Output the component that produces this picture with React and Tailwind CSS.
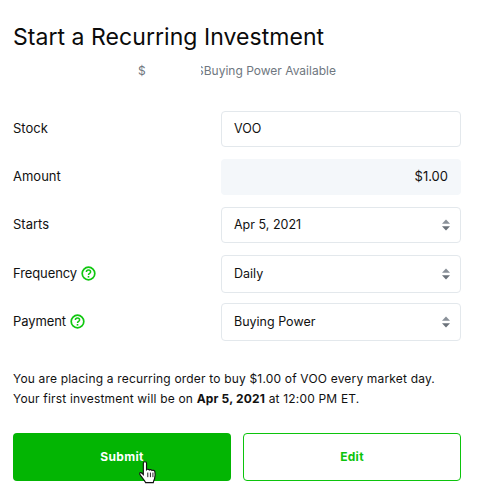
const font = { fontFamily: "Inter, 'Liberation Sans', sans-serif" };

function Help() {
  return (
    <svg width="15" height="15" viewBox="0 0 15 15" className="shrink-0" fill="none">
      <circle cx="7.5" cy="7.500" r="6.300" stroke="#0fc70f" strokeWidth="1.700" />
      <path d="M5.400 6c0-1.300 1-2 2.100-2s2.100.7 2.100 1.900c0 1.500-2.100 1.500-2.100 3" stroke="#0fc70f" strokeWidth="1.500" />
      <rect x="6.700" y="10" width="1.600" height="1.600" fill="#0fc70f" />
    </svg>
  );
}

function Arrows() {
  return (
    <svg width="8" height="12" viewBox="0 0 8 12" className="shrink-0">
      <path d="M4 0.500 8 4.800H0Z" fill="#8a9199" />
      <path d="M4 11.500 0 7.200H8Z" fill="#6b727a" />
    </svg>
  );
}

function Row({ label, help, children }) {
  return (
    <div className="flex items-center justify-between">
      <div className="mb-[2px] flex items-center gap-[4px] text-[13px] leading-5 text-[#111]">
        <span className={help ? "tracking-[-0.1px]" : ""}>{label}</span>
        {help && <Help />}
      </div>
      {children}
    </div>
  );
}

function Select({ value, h = "h-[36px]" }) {
  return (
    <div className={`flex w-[240px] items-center justify-between rounded border border-[#e3e8ec] bg-white pl-[12px] pr-[10px] text-[12.500px] text-[#111] ${h}`}>
      <span>{value}</span>
      <Arrows />
    </div>
  );
}

export default function App() {
  return (
    <div style={font} className="h-[499px] w-[488px] overflow-hidden bg-white px-[13px] pt-[21px]">
      <h1 className="text-[23px] font-normal leading-[32px] tracking-[0.05px] text-[#0b0b0b]">Start a Recurring Investment</h1>
      <div className="mt-[8px] flex h-[20px] items-center pl-[125px] text-[12px] text-[#6f7780]">
        <span>$</span>
        <span className="w-[55px]" />
        <span className="flex w-[3px] justify-end overflow-hidden">
          <span className="shrink-0">$</span>
        </span>
        <span>Buying Power Available</span>
      </div>

      <div className="mt-[30px] flex w-[448px] flex-col gap-[12px]">
        <Row label="Stock">
          <div className="flex h-[36px] w-[240px] items-center rounded border border-[#e3e8ec] bg-white pl-[12px] text-[12.500px] text-[#111]">VOO</div>
        </Row>
        <Row label="Amount">
          <div className="flex h-[36px] w-[240px] items-center justify-end rounded bg-[#f4f7fa] pr-[13px] text-[13px] text-[#111]">$1.00</div>
        </Row>
        <Row label="Starts">
          <Select value="Apr 5, 2021" />
        </Row>
        <div className="flex flex-col gap-[10px]">
          <Row label="Frequency" help>
            <Select value="Daily" h="h-[38px]" />
          </Row>
          <Row label="Payment" help>
            <Select value="Buying Power" h="h-[38px]" />
          </Row>
        </div>
      </div>

      <div className="mt-[28px] text-[12px] leading-[20px] tracking-[0.18px] text-[#111]">
        <p>You are placing a recurring order to buy $1.00 of VOO every market day.</p>
        <p>Your first investment will be on <b className="font-bold">Apr 5, 2021</b> at 12:00 PM ET.</p>
      </div>

      <div className="mt-[24px] flex w-[448px] justify-between">
        <button className="relative h-[48px] w-[218px] rounded bg-[#03b503] text-[12px] font-bold tracking-[0.3px] text-white">
          Submit
          <svg width="19" height="24" viewBox="0 0 16.500 21" className="absolute left-[125px] top-[27px]">
            <path
              d="M6 1.500c.8 0 1.400.6 1.400 1.400v5.600c.5-.6 2-.6 2.400.2.600-.5 2-.4 2.400.5.700-.4 2.200-.2 2.500 1 .3 1.600.3 4.500-.3 6.200-.4 1.100-.9 2-1.100 3.400H6.600c-.5-1.400-2-3-3.600-5.200C2.200 13.500.8 12.200 1.400 11.400c.8-.9 2.200.1 3.200 1.300V2.900c0-.8.600-1.400 1.400-1.400Z"
              fill="#fff"
              stroke="#111"
              strokeWidth="1"
            />
            <path d="M8.500 11v4M10.800 11v4M13 11v4" stroke="#111" strokeWidth="0.800" />
          </svg>
        </button>
        <button className="h-[48px] w-[218px] rounded border border-[#0cc40c] bg-white text-[12px] font-bold tracking-[0.3px] text-[#0cc40c]">
          Edit
        </button>
      </div>
    </div>
  );
}
